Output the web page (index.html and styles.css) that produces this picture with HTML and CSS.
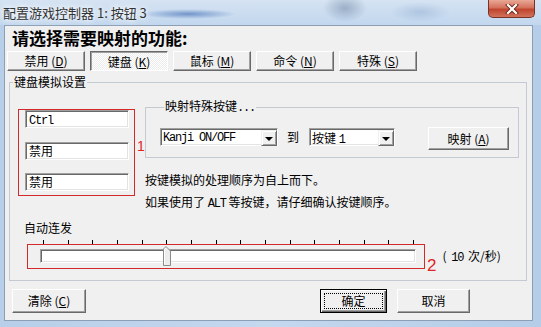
FILE: index.html
```html
<!DOCTYPE html>
<html lang="zh-CN">
  <head>
    <meta charset="UTF-8" />
    <title>配置游戏控制器</title>
    <link rel="stylesheet" href="styles.css">
  </head>
  <body>
    <div class="window">
      <div class="titlebar">
        <span class="title">配置游戏控制器 1: 按钮 3</span>
        <div class="close">
          <svg width="14" height="10" viewBox="0 0 14 10">
            <path d="M3 1 L11 9 M11 1 L3 9" stroke="#6a2418" stroke-width="4" stroke-linecap="square" />
            <path d="M3 1 L11 9 M11 1 L3 9" stroke="#fff" stroke-width="2.2" stroke-linecap="square" />
          </svg>
        </div>
      </div>

      <div class="client">
        <h1>请选择需要映射的功能:</h1>

        <div class="tabs">
          <button class="btn tab">禁用 (<u>D</u>)</button>
          <button class="btn tab on">键盘 (<u>K</u>)</button>
          <button class="btn tab">鼠标 (<u>M</u>)</button>
          <button class="btn tab">命令 (<u>N</u>)</button>
          <button class="btn tab">特殊 (<u>S</u>)</button>
        </div>

        <fieldset class="group">
          <legend>键盘模拟设置</legend>

          <div class="keys">
            <div class="keybox">
              <div class="field"><span class="lat">Ctrl</span></div>
              <div class="field">禁用</div>
              <div class="field">禁用</div>
            </div>
            <span class="mark mark-1">1</span>

            <div class="right">
              <fieldset class="sub">
                <legend>映射特殊按键<span class="lat">...</span></legend>
                <div class="map-row">
                  <div class="combo combo-key">
                    <span class="val lat">Kanji ON/OFF</span>
                    <span class="arrow"></span>
                  </div>
                  <span class="to">到</span>
                  <div class="combo combo-btn">
                    <span class="val">按键 <span class="lat">1</span></span>
                    <span class="arrow"></span>
                  </div>
                  <button class="btn map-btn">映射 (<u>A</u>)</button>
                </div>
              </fieldset>
              <p class="note">按键模拟的处理顺序为自上而下。</p>
              <p class="note">如果使用了 <span class="lat">ALT</span> 等按键，请仔细确认按键顺序。</p>
            </div>
          </div>

          <div class="auto">自动连发</div>
          <div class="ticks">
            <i></i><i></i><i></i><i></i><i></i><i></i><i></i><i></i>
            <i></i><i></i><i></i><i></i><i></i><i></i><i></i><i></i>
          </div>
          <div class="slider-row">
            <div class="slider-box">
              <div class="track">
                <svg class="thumb" style="left: 122px" width="8" height="20" viewBox="0 0 8 20">
                  <path d="M0.5 19.5 V3 L3 0.5 L7.5 5 V19.5 Z" fill="#ececec" stroke="#8a8a8a" />
                  <path d="M1.5 18.5 V3.4 L3 1.9" fill="none" stroke="#fff" />
                </svg>
              </div>
            </div>
            <span class="mark mark-2">2</span>
            <span class="rate">( <span class="lat">10</span> 次/秒)</span>
          </div>
        </fieldset>

        <div class="footer">
          <button class="btn foot-btn">清除 (<u>C</u>)</button>
          <button class="btn foot-btn ok">确定</button>
          <button class="btn foot-btn cancel">取消</button>
        </div>
      </div>
    </div>
  </body>
</html>
```

FILE: styles.css
```css
* {
  box-sizing: border-box;
}

body {
  margin: 0;
  font-family: "Noto Sans CJK SC", sans-serif;
  font-size: 12px;
  color: #000;
}

.lat {
  font-family: "Liberation Mono", monospace;
  letter-spacing: -1.2px;
}

u {
  text-decoration: underline;
}

/* Window frame */
.window {
  width: 541px;
  height: 327px;
  overflow: hidden;
  background: linear-gradient(90deg, #b8cfe9, #c4d8ee 50%, #b5cde8);
}

.titlebar {
  height: 25px;
  display: flex;
  padding-left: 3px;
  background:
    radial-gradient(ellipse 48px 5px at 188px 14px, rgba(40, 90, 170, 0.55), transparent),
    radial-gradient(ellipse 22px 14px at 345px 8px, rgba(60, 85, 120, 0.35), transparent),
    radial-gradient(ellipse 30px 10px at 420px 12px, rgba(90, 130, 180, 0.25), transparent),
    linear-gradient(#d5e3f2, #c2d7ee);
}

.title {
  font-size: 13px;
  line-height: 25px;
  color: #333;
  text-shadow: 0 0 5px #fff, 0 0 8px #fff;
}

.close {
  margin-left: auto;
  margin-right: 6px;
  width: 47px;
  height: 18px;
  display: flex;
  align-items: center;
  justify-content: center;
  border: 1px solid #7a3226;
  border-top: none;
  border-radius: 0 0 5px 5px;
  background: linear-gradient(#e9a896, #d4715c 45%, #c0452e 55%, #d2735c);
}

.client {
  margin-left: 4px;
  width: 529px;
  height: 296px;
  border: 1px solid #8d9fb5;
  background: #f0f0f0;
  padding-left: 2px;
}

h1 {
  margin: 2px 0 0 5px;
  font-size: 17px;
  line-height: 20px;
  font-weight: bold;
}

/* Classic 3D buttons */
.btn {
  font-family: "Noto Sans CJK SC", sans-serif;
  font-size: 12px;
  color: #000;
  background: #f0f0f0;
  border: 1px solid;
  border-color: #fff #696969 #696969 #fff;
  box-shadow: inset -1px -1px #a0a0a0;
  padding: 0;
  line-height: 16px;
}

.tabs {
  display: flex;
  gap: 5px;
  margin-top: 3px;
}

.tab {
  width: 78px;
  height: 20px;
}

.tab.on {
  border-color: #696969 #fff #fff #696969;
  box-shadow: inset 1px 1px #a0a0a0;
  background: repeating-conic-gradient(#fff 0 25%, #ececec 0 50%) 0 0 / 2px 2px;
  padding-top: 1px;
}

/* Group boxes */
.group {
  margin: 4px 0 0 2px;
  width: 518px;
  border: 1px solid #c3cad1;
  padding: 0 0 6px;
  min-width: 0;
}

legend {
  margin-left: 3px;
  padding: 0 1px;
  line-height: 14px;
}

.keys {
  display: flex;
  align-items: flex-start;
  margin-left: 8px;
}

.keybox {
  margin-top: 20px;
  width: 117px;
  height: 87px;
  border: 1px solid #d22a2a;
  padding-left: 6px;
  display: flex;
  flex-direction: column;
  gap: 13.5px;
}

.field {
  width: 104px;
  height: 18px;
  background: #fff;
  border: 1px solid;
  border-color: #a0a0a0 #fff #fff #a0a0a0;
  box-shadow: inset 1px 1px #696969, inset -1px -1px #e3e3e3;
  padding-left: 3px;
  line-height: 16px;
}

.mark {
  color: #e02424;
  font-family: "Liberation Sans", sans-serif;
}

.mark-1 {
  width: 8px;
  margin: 50px 0 0 2px;
  font-size: 14px;
  line-height: 14px;
}

.right {
  margin-top: 10px;
  width: 374px;
}

.sub {
  margin: 0;
  border: 1px solid #c3cad1;
  padding: 12px 0 7px 14px;
  min-width: 0;
}

.sub legend {
  margin-left: 4px;
}

.map-row {
  display: flex;
  align-items: flex-start;
}

.combo {
  margin-top: 1px;
  height: 18px;
  display: flex;
  background: #fff;
  border: 1px solid;
  border-color: #a0a0a0 #fff #fff #a0a0a0;
  box-shadow: inset 1px 1px #696969, inset -1px -1px #e3e3e3;
  padding: 1px;
}

.combo-key {
  width: 118px;
}

.combo-btn {
  width: 86px;
}

.val {
  flex: 1;
  padding-left: 1px;
  line-height: 16px;
  white-space: nowrap;
}

.arrow {
  width: 16px;
  height: 16px;
  margin-right: -1px;
  background: #f0f0f0;
  border: 1px solid;
  border-color: #f0f0f0 #696969 #696969 #f0f0f0;
  box-shadow: inset 1px 1px #fff, inset -1px -1px #a0a0a0;
  display: flex;
  align-items: center;
  justify-content: center;
}

.arrow::before {
  content: "";
  border-left: 4px solid transparent;
  border-right: 4px solid transparent;
  border-top: 4px solid #000;
  margin-top: 1px;
}

.to {
  margin: 1px 10px 0 9px;
  line-height: 18px;
}

.map-btn {
  margin-left: 33px;
  width: 81px;
  height: 23px;
}

.note {
  margin: 6px 0 0;
  line-height: 16px;
}

.sub + .note {
  margin-top: 14px;
}

/* Auto-fire slider */
.auto {
  margin: 8px 0 0 14px;
  line-height: 16px;
}

.ticks {
  margin: 4px 0 0 33px;
  width: 371px;
  height: 4px;
  display: flex;
  justify-content: space-between;
}

.ticks i {
  width: 1px;
  background: #000;
}

.slider-row {
  display: flex;
  align-items: flex-start;
}

.slider-box {
  margin-left: 17px;
  width: 398px;
  height: 25px;
  border: 1px solid #d22a2a;
  padding: 4px 0 0 12px;
}

.track {
  position: relative;
  width: 376px;
  height: 14px;
  background: #fff;
  border: 1px solid;
  border-color: #a0a0a0 #fff #fff #a0a0a0;
  box-shadow: inset 1px 1px #696969, inset -1px -1px #e3e3e3;
}

.thumb {
  position: absolute;
  top: -4px;
}

.mark-2 {
  margin: 14px 0 0 2px;
  font-size: 17px;
  line-height: 16px;
}

.rate {
  margin: 4px 0 0 6px;
  line-height: 16px;
  word-spacing: 2px;
}

/* Footer buttons */
.footer {
  display: flex;
  margin-top: 8px;
  padding-left: 5px;
}

.foot-btn {
  height: 24px;
  width: 74px;
}

.ok {
  margin-left: 234px;
  width: 67px;
  border: 1px solid #000;
  box-shadow: inset 1px 1px #fff, inset -1px -1px #696969, inset -2px -2px #a0a0a0;
  outline: 1px dotted #000;
  outline-offset: -5px;
}

.cancel {
  margin-left: 10px;
  width: 73px;
}
```
